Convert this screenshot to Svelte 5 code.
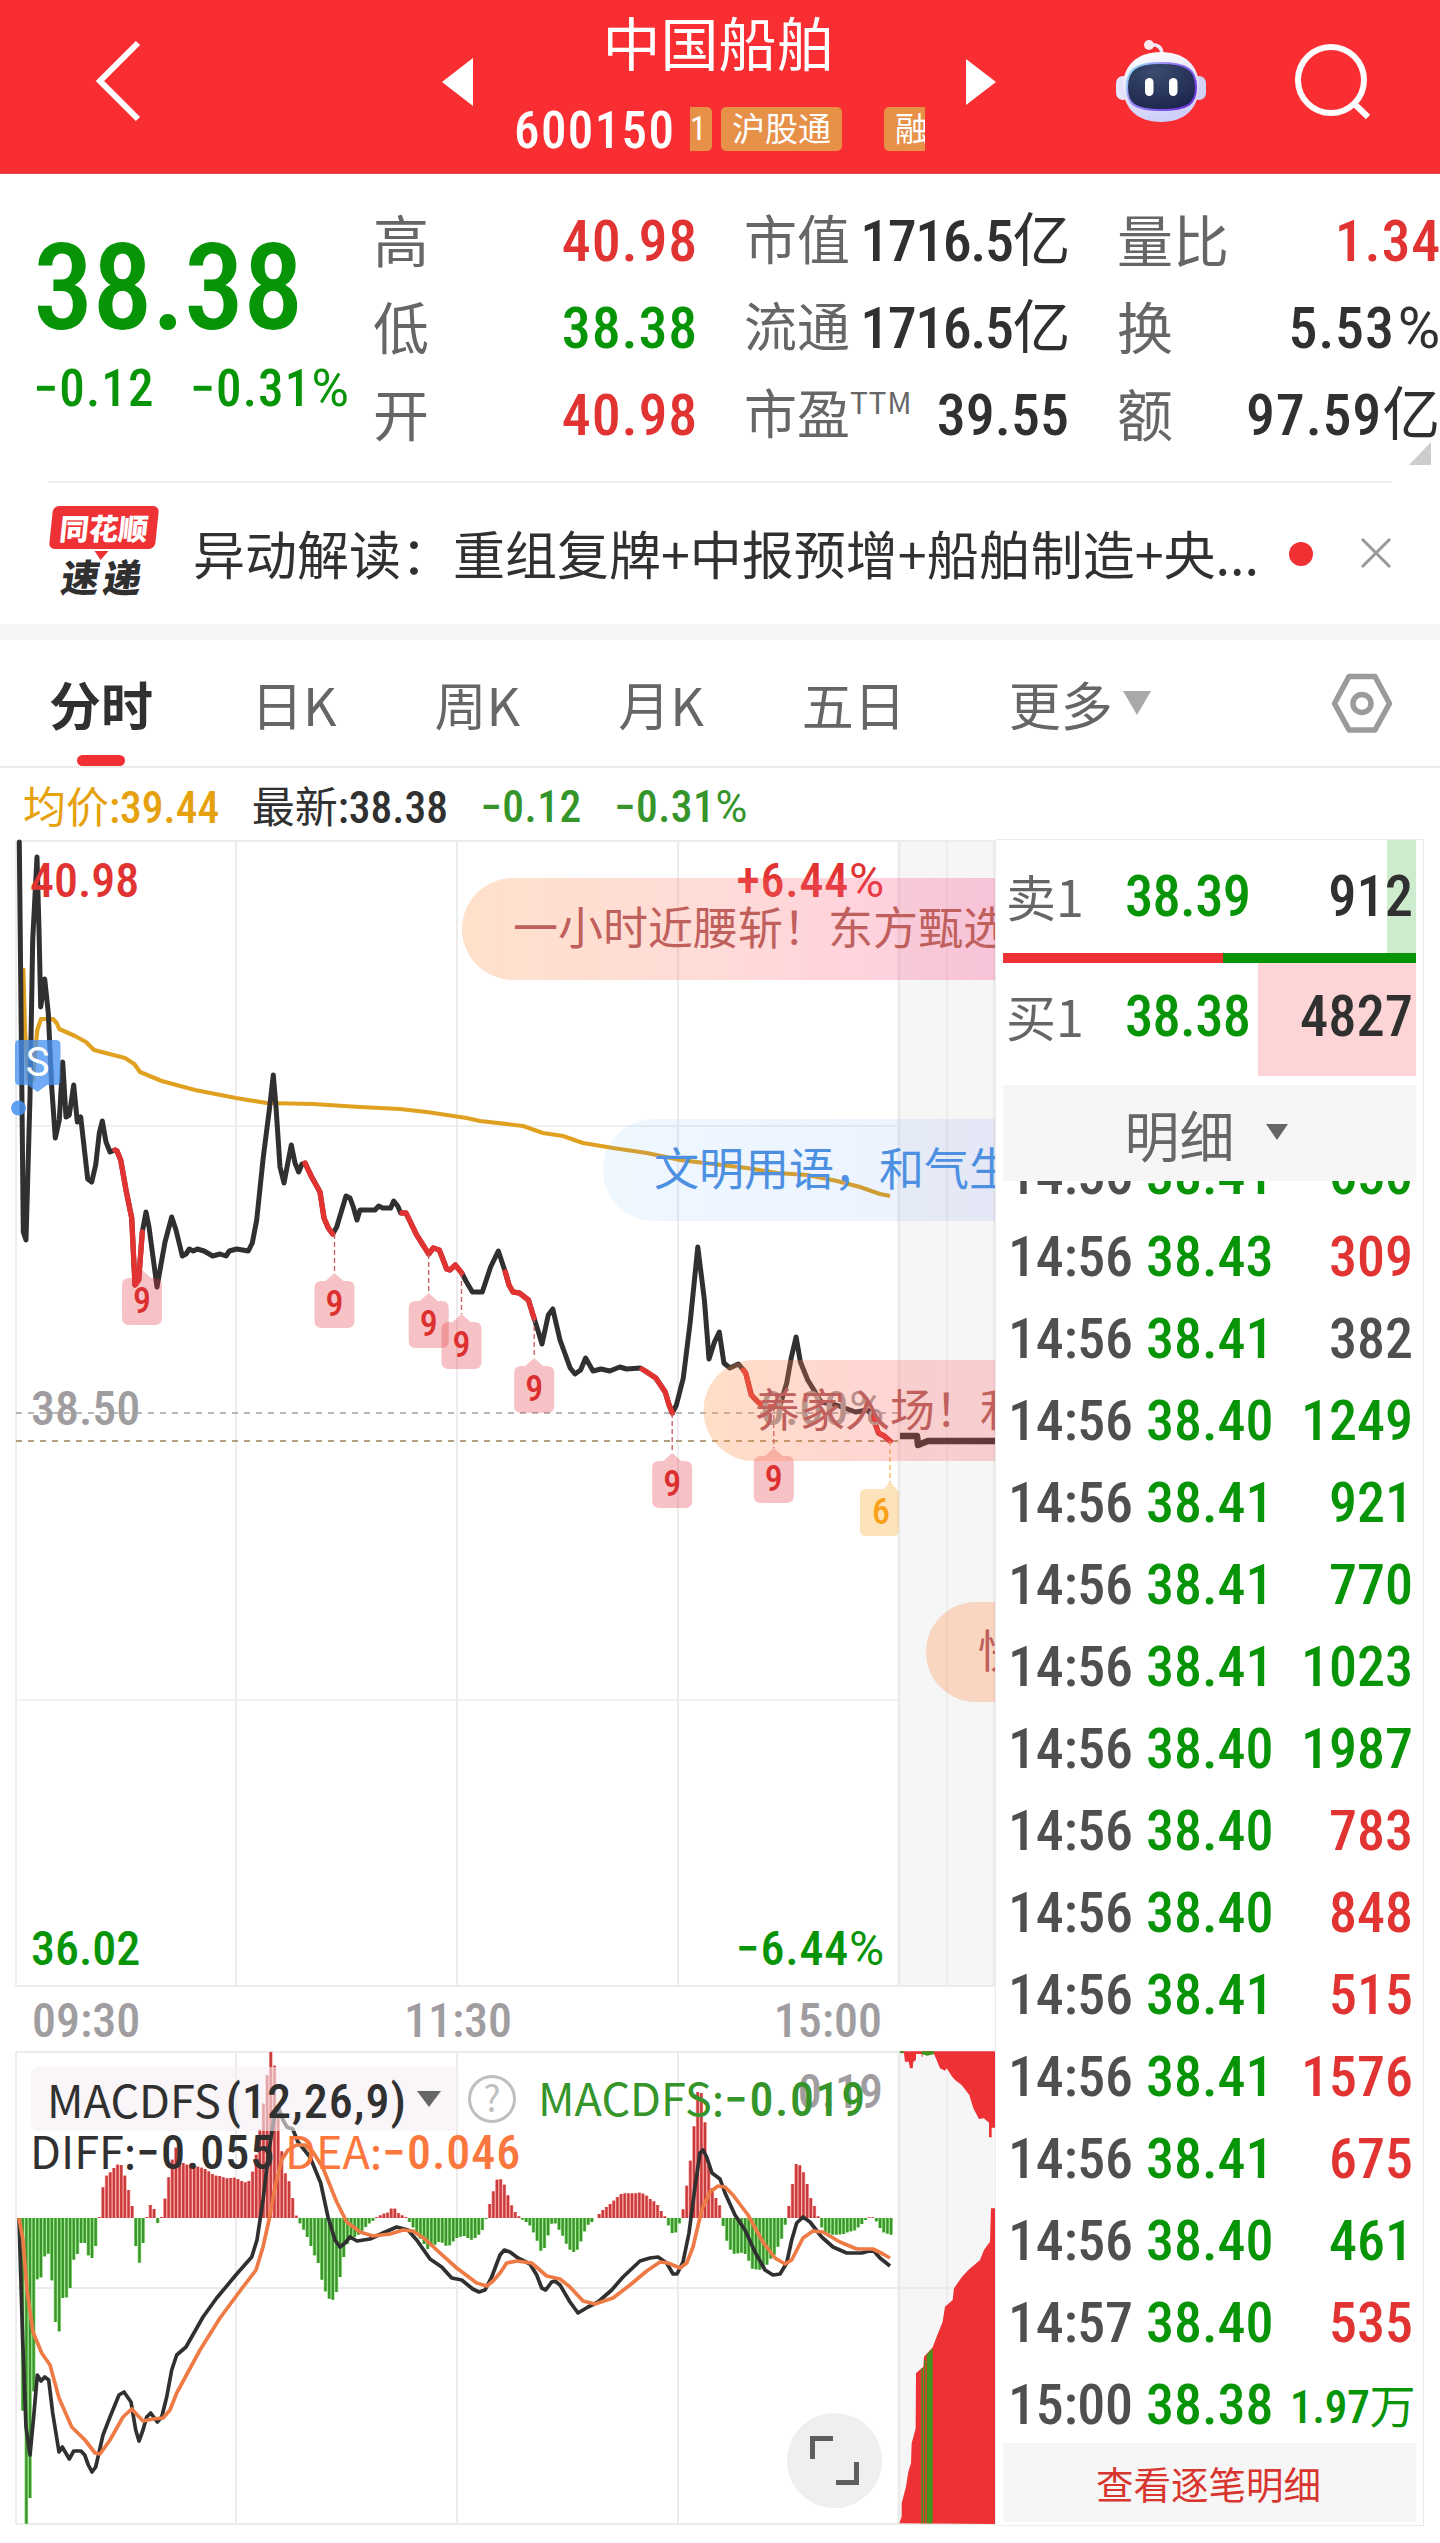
<script lang="ts">
  // ── Quote data ───────────────────────────────────────────────────────────────

  type Tone = 'up' | 'down' | 'flat';

  interface Stat {
    label: string;
    sup?: string;
    value: string;
    tone: Tone;
  }

  const stats: Stat[][] = [
    [
      { label: '高', value: '40.98', tone: 'up' },
      { label: '低', value: '38.38', tone: 'down' },
      { label: '开', value: '40.98', tone: 'up' },
    ],
    [
      { label: '市值', value: '1716.5亿', tone: 'flat' },
      { label: '流通', value: '1716.5亿', tone: 'flat' },
      { label: '市盈', sup: 'TTM', value: '39.55', tone: 'flat' },
    ],
    [
      { label: '量比', value: '1.34', tone: 'up' },
      { label: '换', value: '5.53%', tone: 'flat' },
      { label: '额', value: '97.59亿', tone: 'flat' },
    ],
  ];

  const tabs = ['分时', '日K', '周K', '月K', '五日', '更多'];
  let activeTab = $state('分时');

  const trades: [string, string, string, Tone][] = [
    ['14:56', '38.41', '650', 'down'],
    ['14:56', '38.43', '309', 'up'],
    ['14:56', '38.41', '382', 'flat'],
    ['14:56', '38.40', '1249', 'down'],
    ['14:56', '38.41', '921', 'down'],
    ['14:56', '38.41', '770', 'down'],
    ['14:56', '38.41', '1023', 'down'],
    ['14:56', '38.40', '1987', 'down'],
    ['14:56', '38.40', '783', 'up'],
    ['14:56', '38.40', '848', 'up'],
    ['14:56', '38.41', '515', 'up'],
    ['14:56', '38.41', '1576', 'up'],
    ['14:56', '38.41', '675', 'up'],
    ['14:56', '38.40', '461', 'down'],
    ['14:57', '38.40', '535', 'up'],
    ['15:00', '38.38', '1.97万', 'down'],
  ];

  // ── Intraday chart ───────────────────────────────────────────────────────────

  const priceLine =
    '19.3,842 23.3,1232 26,1240 30,1097 32.7,940 37,857 39,930 40.7,1007 44.7,979 48.3,1013 51.7,1087 55.3,1138 59.3,1120 62.7,1062 66,1117 69.3,1115 73.7,1085 77.3,1122 80.7,1117 87.7,1179 91.7,1182 95.7,1165 99.3,1133 102.3,1121 106,1142 110,1152 115,1150 ' +
    '117,1151 120.7,1160 126,1190 131.7,1218 135,1285 138.7,1280 142.3,1232 146,1212 149,1227 157,1287 165,1242 171.7,1217 176,1230 182.3,1256 186,1254 189.3,1249 193.3,1251 197.3,1249 204,1251 212.7,1256 220,1254 226,1256 229.3,1251 236.7,1249 248.3,1251 252.3,1243 256.7,1220 263.3,1157 269.3,1110 273.3,1075 276,1107 280,1167 284,1183 291.3,1145 295,1163 298.7,1172 302,1164 305,1163 ' +
    '311.7,1177 320,1192 324,1218 328.3,1228 332.7,1234 336.7,1227 346,1196 350,1198 353.3,1207 357,1220 360,1210 375,1210 378.7,1206 382.7,1208 390.7,1208 393.7,1201 397.7,1206 400.7,1213 406,1213 416.7,1235 428.7,1254 433.3,1248 439.3,1250 446.7,1269 450,1270 455.3,1265 461.7,1273 ' +
    '466.5,1282 472.4,1292 482.3,1292 490.6,1267 498.3,1251 505.3,1272 509,1285 513,1292 519.4,1293 528.4,1300 534,1318 537.8,1330 542,1344 548.3,1315 552.8,1309 560,1340 570.2,1368 575,1374 580.6,1370 585.6,1358 593,1371 601,1369 609.8,1371 619.8,1367 626.6,1369 640.4,1368 ' +
    '646.8,1372 655.8,1378 665.2,1392 669.1,1405 672.3,1413 676.4,1405 683.3,1378 690.1,1323 697.8,1247 704.4,1300 709,1359 714.5,1342 719.3,1332 723.9,1363 729.9,1368 738.4,1364 743.4,1370 745.7,1373 751.3,1395 757.9,1402 765.6,1407 773.6,1407 780.2,1405 786.7,1383 791.2,1358 796.1,1337 800.4,1362 807.7,1380 812.7,1388 821,1402 836.4,1405 855.5,1412 867.8,1410 872.8,1417 878.5,1433 884.2,1436 890,1441';

  const fallingRuns = [
    '115,1150 117,1151 120.7,1160 126,1190 131.7,1218 135,1285 138.7,1280 142.3,1232',
    '305,1163 311.7,1177 320,1192 324,1218 328.3,1228 332.7,1234',
    '402,1213 406,1213 416.7,1235 428.7,1254 433.3,1248 439.3,1250 446.7,1269 450,1270 455.3,1265 461.7,1273',
    '505.3,1272 509,1285 513,1292 519.4,1293 528.4,1300 534,1318',
    '642,1369 646.8,1372 655.8,1378 665.2,1392 669.1,1405 672.3,1413',
    '743.4,1370 745.7,1373 751.3,1395 757.9,1402 765.6,1407 773.6,1407',
    '872.8,1417 878.5,1433 884.2,1436 890,1441',
  ];

  const averageLine =
    '23.3,968 25,1030 28,1080 33,1080 36,1043 37.3,1030 41,1019 53,1019 56.7,1023 59.3,1029 75,1036 86,1042 94,1050 125,1058 134.3,1064 140,1072 161.7,1081 195,1090 236,1098 266.7,1103 313,1104 360,1107 400,1109 426.7,1112 466.7,1118 480,1121 523,1126 543,1133 563,1136 583,1143 613,1148 647,1153 680,1160 713,1164 747,1168 777,1173 807,1175 837,1181 860,1187 880,1194 890,1196';

  // x, y of the price point, y of the flag tip
  const nines = [
    [142, 1270, 1270],
    [334.5, 1234, 1273],
    [428.7, 1254, 1293],
    [461.5, 1273, 1314],
    [534.2, 1318, 1358],
    [672.2, 1413, 1453],
    [773.8, 1407, 1448],
  ];

  // ── MACD ─────────────────────────────────────────────────────────────────────

  const zeroY = 2218;

  // histogram, in thirds of a pixel
  const macd = [
    0, -578, -917, -840, -520, -184, -178, -115, -107, -187, -312, -340, -240, -238, -210, -125, -108, -75, -75, -112,
    -120, -84, 3, 92, 127, 137, 150, 160, 159, 127, 84, 36, -84, -134, -75, 3, 39, 27, -15, 3,
    58, 122, 175, 211, 195, 165, 160, 159, 157, 154, 151, 147, 140, 132, 127, 126, 122, 119, 120, 121,
    117, 111, 107, 111, 139, 190, 265, 343, 428, 498, 457, 310, 200, 134, 110, 60, 7, -16, -35, -57,
    -84, -112, -135, -185, -220, -242, -245, -222, -177, -117, -78, -66, -57, -50, -38, -27, -16, -8, 3, 8,
    13, 16, 28, 28, 15, 8, 3, -12, -28, -45, -62, -78, -93, -85, -80, -72, -74, -83, -82, -70,
    -60, -56, -54, -60, -65, -60, -50, -36, -3, 42, 80, 115, 116, 100, 68, 38, 18, 5, -5, -12,
    -22, -43, -68, -98, -90, -52, -17, -16, -35, -53, -77, -95, -102, -95, -70, -40, -20, -12, 0, 12,
    24, 33, 42, 52, 63, 72, 74, 74, 74, 74, 76, 73, 67, 57, 50, 39, 21, 5, -22, -45,
    -43, -16, 26, 97, 172, 275, 378, 375, 287, 160, 90, 60, 38, -24, -68, -95, -107, -106, -104, -108,
    -128, -152, -154, -155, -150, -140, -122, -110, -86, -62, -20, 36, 102, 162, 158, 137, 102, 60, 36, 5,
    -28, -43, -46, -50, -50, -49, -48, -43, -40, -37, -28, -18, -6, 2, 2, -10, -30, -43, -47, -50,
  ];

  const barStep = (891 - 19) / (macd.length - 1);

  const bars = macd.map((v, i) => {
    const height = Math.abs(v) / 3;
    return { x: 19 + i * barStep, y: v > 0 ? zeroY - height : zeroY, height, up: v > 0 };
  });

  const diffLine =
    '19,2218 22.7,2340 26,2427 30,2455 34,2413 37.3,2375 41,2381 44.7,2377 48.7,2380 52.7,2413 59,2452 62.3,2447 69.3,2459 73.7,2451 81,2451 84.7,2455 88.3,2465 92,2472 95.7,2467 103,2435 110,2417 119,2395 124,2392 131,2402 135.7,2430 139,2441 143,2430 146.7,2417 150.7,2413 157.3,2422 161.7,2417 166.7,2397 171.7,2370 176.7,2355 186,2347 203,2317 216.7,2298 236.7,2274 251.7,2257 257,2240 263,2200 269,2150 275,2113 279,2109 283,2120 287,2127 292.7,2129 298,2142 310,2157 320.7,2183 328,2217 335,2240 340,2247 345,2243 350,2237 357,2241 370,2239 383,2233 396.7,2227 408,2230 416.7,2240 430,2259 441.7,2267 451.7,2278 461.7,2280 472.7,2289 479,2292 485,2290 491.7,2277 500,2255 504.3,2250 510,2252 518,2258 530,2264 536.7,2275 541.7,2288 545.7,2290 551.7,2282 555,2281 560,2285 570,2302 578,2313 588,2307 598,2302 611.7,2290 623,2277 640,2261 650,2258 658,2257 666.7,2263 673,2274 677,2274 683,2262 689,2233 695,2187 700,2153 703,2150 706.7,2157 712,2173 720,2179 725,2193 735,2215 745,2230 755,2252 765,2270 773,2275 780,2274 786.7,2263 791.7,2240 796.7,2223 803,2217 810,2222 821.7,2237 833,2247 846.7,2253 861.7,2253 873,2250 880,2258 890,2266';

  const deaLine =
    '19,2218 23,2240 27,2290 33,2332 41.7,2353 50,2365 59,2398 71.7,2427 85,2440 95,2453 100,2454 110,2440 123,2417 131.7,2409 143,2421 153,2419 163,2418 170,2410 176.7,2393 200,2350 220,2318 243,2287 256,2270 263,2247 269,2220 275,2187 281.7,2160 288,2150 296.7,2145 305,2145 313,2152 323,2168 336.7,2202 346.7,2222 360,2232 373,2236 390,2234 403,2230 413,2231 425,2239 440,2253 456.7,2268 476.7,2283 486.7,2286 493,2281 500,2273 506.7,2263 516.7,2261 531.7,2263 546.7,2276 560,2279 570,2287 583,2301 595,2304 613,2298 630,2285 646.7,2271 660,2262 668,2263 680,2268 686.7,2263 693,2247 701.7,2210 710,2192 718,2186 725,2187 733,2195 748,2215 763,2242 775,2258 785,2264 791.7,2260 803,2238 813,2231 823,2232 840,2242 856.7,2249 873,2249 883,2254 890,2258';
</script>

<!-- number with its trailing unit in a lighter face -->
{#snippet figure(value: string)}
  {#if value.endsWith('%')}{value.slice(0, -1)}<i class="pct">%</i>{:else if /[亿万]$/.test(value)}{value.slice(0, -1)}<i class="unit">{value.slice(-1)}</i>{:else}{value}{/if}
{/snippet}

<div class="page">
  <!-- ── Title bar ── -->
  <header class="topbar">
    <svg class="back" width="50" height="84" viewBox="0 0 50 84" fill="none" stroke="#fff" stroke-width="6" aria-label="返回">
      <path d="M44 3 6 41 44 79" />
    </svg>
    <svg class="prev" width="31" height="48" viewBox="0 0 31 48" fill="#fff"><path d="M31 0v48L0 24z" /></svg>
    <div class="stock">
      <h1>中国船舶</h1>
      <div class="code-row">
        <span class="code">600150</span>
        <div class="tags">
          <span class="tag tag--first">1</span>
          <span class="tag">沪股通</span>
          <span class="tag tag--last">融</span>
        </div>
      </div>
    </div>
    <svg class="next" width="30" height="46" viewBox="0 0 30 46" fill="#fff"><path d="M0 0v46L30 23z" /></svg>
    <svg class="robot" width="90" height="84" viewBox="0 0 90 84">
      <defs>
        <linearGradient id="shell" x1="0" y1="0" x2="0.3" y2="1">
          <stop offset="0" stop-color="#fff" />
          <stop offset="0.6" stop-color="#e4e2f8" />
          <stop offset="1" stop-color="#cfd0fa" />
        </linearGradient>
        <linearGradient id="rim" x1="0" y1="0" x2="1" y2="0.6">
          <stop offset="0" stop-color="#8ff0f0" />
          <stop offset="0.4" stop-color="#9a8cf8" />
          <stop offset="1" stop-color="#7038e0" />
        </linearGradient>
        <radialGradient id="visor" cx="0.4" cy="0.2" r="0.9">
          <stop offset="0" stop-color="#3c4a6e" />
          <stop offset="1" stop-color="#18234a" />
        </radialGradient>
      </defs>
      <path d="M33 5q13-2 13 10" fill="none" stroke="#efeaf8" stroke-width="3.5" />
      <circle cx="33" cy="5" r="5" fill="#fbe9f0" />
      <rect x="0" y="36" width="14" height="24" rx="7" fill="#e6e4fa" />
      <rect x="76" y="36" width="14" height="24" rx="7" fill="#d2d2f6" />
      <path d="M45 12c24 0 38 14 38 34 0 22-14 36-38 36S7 68 7 46c0-20 14-34 38-34z" fill="url(#shell)" />
      <path d="M45 23c26 0 35 7 35 24s-8 23-35 23-34-6-34-23 8-24 34-24z" fill="url(#visor)" stroke="url(#rim)" stroke-width="2" />
      <rect x="29" y="38" width="8.5" height="18" rx="4.2" fill="#fff" />
      <rect x="53" y="38" width="8.5" height="18" rx="4.2" fill="#fff" />
    </svg>
    <svg class="search" width="78" height="78" viewBox="0 0 78 78" fill="none" stroke="#fff" stroke-width="6" aria-label="搜索">
      <circle cx="36" cy="37" r="33" />
      <path d="M59.5 61 73 74" />
    </svg>
  </header>

  <!-- ── Quote ── -->
  <section class="quote">
    <div class="last">
      <strong class="last-price">38.38</strong>
      <div class="last-change"><span>−0.12</span><span>{@render figure('−0.31%')}</span></div>
    </div>
    {#each stats as column, c (c)}
      <dl class="stats" class:stats--cap={c === 1}>
        {#each column as stat (stat.label)}
          <div class="stat">
            <dt>{stat.label}{#if stat.sup}<sup>{stat.sup}</sup>{/if}</dt>
            <dd class={stat.tone} class:with-unit={stat.value.endsWith('亿')}>{@render figure(stat.value)}</dd>
          </div>
        {/each}
      </dl>
    {/each}
    <svg class="corner" width="22" height="23" viewBox="0 0 22 23" fill="#ccc"><path d="M22 0v23H0z" /></svg>
  </section>

  <!-- ── News strip ── -->
  <section class="news">
    <div class="news-logo">
      <span class="logo-top">同花顺</span>
      <span class="logo-bottom">速递</span>
    </div>
    <p class="news-text">异动解读：重组复牌+中报预增+船舶制造+央...</p>
    <span class="dot"></span>
    <svg width="32" height="32" viewBox="0 0 32 32" stroke="#999" stroke-width="3" aria-label="关闭">
      <path d="M2 1 30 29M30 1 2 29" />
    </svg>
  </section>

  <!-- ── Period tabs ── -->
  <nav class="tabs">
    {#each tabs as tab (tab)}
      <button class="tab" class:tab--active={tab === activeTab} onclick={() => (activeTab = tab)}>{tab}</button>
    {/each}
    <svg class="more" width="28" height="24" viewBox="0 0 28 24" fill="#aaa8aa"><path d="M0 0h28L14 24z" /></svg>
    <svg class="settings" width="62" height="60" viewBox="0 0 62 60" fill="none" stroke="#9b9b9b" stroke-width="5.5" stroke-linejoin="round">
      <path d="M18 3.5h26L58.500 30.500 44 57H18L3.500 30.500z" />
      <circle cx="31" cy="30.500" r="9" />
    </svg>
  </nav>

  <div class="summary">
    <span class="avg"><i class="unit">均价</i>:39.44</span>
    <span><i class="unit">最新</i>:38.38</span>
    <span class="chg">−0.12</span>
    <span class="chg">{@render figure('−0.31%')}</span>
  </div>

  <main class="board">
    <svg class="chart" width="995" height="1704" viewBox="0 839 995 1704">
      <defs>
        <linearGradient id="warm" x1="0" x2="1">
          <stop offset="0" stop-color="#ff9a50" stop-opacity="0.3" />
          <stop offset="0.45" stop-color="#ff7a68" stop-opacity="0.26" />
          <stop offset="1" stop-color="#ff3288" stop-opacity="0.26" />
        </linearGradient>
        <linearGradient id="peach" x1="0" x2="1">
          <stop offset="0" stop-color="#ff9a50" stop-opacity="0.32" />
          <stop offset="0.5" stop-color="#ff6a58" stop-opacity="0.27" />
          <stop offset="1" stop-color="#ff4c58" stop-opacity="0.24" />
        </linearGradient>
        <linearGradient id="cool" x1="0" x2="1">
          <stop offset="0" stop-color="#4da6ff" stop-opacity="0.09" />
          <stop offset="0.6" stop-color="#4d96ff" stop-opacity="0.1" />
          <stop offset="1" stop-color="#5a6ef0" stop-opacity="0.11" />
        </linearGradient>
      </defs>

      <!-- grid -->
      <rect x="898" y="841" width="98" height="1145" fill="#f6f6f6" />
      <rect x="898" y="2052" width="98" height="472" fill="#f6f6f6" />
      <g stroke="#ececec" stroke-width="2" fill="none">
        <path d="M16 841V1986M236 841V1986M457 841V1986M678 841V1986M947 841V1986M994 841V1986" />
        <path d="M16 841H995M16 1986H995" />
        <path d="M16 1126H899M16 1700H899" stroke-width="1.5" />
        <path d="M16 2052V2524M236 2052V2524M457 2052V2524M678 2052V2524M947 2052V2524" />
        <path d="M16 2052H995M16 2288H995M16 2524H995" />
        <path d="M899 841V1986M899 2052V2524" stroke-width="3" />
      </g>
      <path d="M16 1413H899" stroke="#a0a0a0" stroke-width="1.700" stroke-dasharray="6 6" />
      <path d="M16 1441H899" stroke="#b39f7c" stroke-width="2" stroke-dasharray="6 6" />

      <!-- price and average -->
      <g fill="none" stroke-linejoin="round" stroke-linecap="round">
        <polyline points={averageLine} stroke="#e0a020" stroke-width="4.2" stroke-linecap="butt" />
        <polyline points={priceLine} stroke="#303030" stroke-width="5" />
        {#each fallingRuns as run (run)}
          <polyline points={run} stroke="#e03332" stroke-width="5.4" />
        {/each}
        <polyline points="900,1436 917,1436 918,1445 923,1443 928,1441 996,1441" stroke="#303030" stroke-width="6.5" stroke-linecap="butt" />
      </g>

      <!-- nine-count flags -->
      {#each nines as [x, from, tip] (x)}
        <path d="M{x} {from}V{tip}" stroke="#c65a60" stroke-width="1.3" stroke-dasharray="5 3" />
        <path class="flag" d="M{x} {tip}l9 8h4q7 0 7 7v33q0 7-7 7h-26q-7 0-7-7v-33q0-7 7-7h4z" />
        <text class="num flag-num" {x} y={tip + 43}>9</text>
      {/each}
      <path d="M890 1441V1482" stroke="#f2b95a" stroke-width="1.3" stroke-dasharray="5 3" />
      <path d="M890 1481l6 8q3 1 3 5v36q0 6-6 6h-27q-6 0-6-6v-35q0-6 6-6h18z" fill="#f9a11b" fill-opacity="0.3" />
      <text class="num flag-num flag-num--amber" x="881" y="1524">6</text>

      <!-- sell marker -->
      <path d="M19 1040h37q4.5 0 4.5 4.5v36q0 4.5-4.5 4.5h-9l-9.5 7-9.5-7h-9q-4 0-4-4.5v-36q0-4.5 4-4.5z" fill="#4590f2" fill-opacity="0.76" />
      <text class="sell" x="37.5" y="1076">S</text>
      <circle cx="18.500" cy="1108" r="7.5" fill="#4590f2" fill-opacity="0.85" />

      <!-- axis labels -->
      <g class="num axis">
        <text class="fill-up" x="30" y="897">40.98</text>
        <text class="fill-up wide" x="885" y="897" text-anchor="end">+6.44<tspan class="pct">%</tspan></text>
        <text x="31" y="1425">38.50</text>
        <text class="wide" x="885" y="1425" text-anchor="end">0.00<tspan class="pct">%</tspan></text>
        <text class="fill-down" x="31" y="1965">36.02</text>
        <text class="fill-down wide" x="885" y="1965" text-anchor="end">−6.44<tspan class="pct">%</tspan></text>
        <text x="32" y="2037">09:30</text>
        <text x="458" y="2037" text-anchor="middle">11:30</text>
        <text x="882" y="2037" text-anchor="end">15:00</text>
      </g>

      <!-- bullet comments -->
      <path d="M1000 878H513a51 51 0 0 0 0 102H1000z" fill="url(#warm)" />
      <text class="bullet" x="513" y="945">一小时近腰斩！东方甄选</text>
      <path d="M1000 1119H654a51 51 0 0 0 0 102H1000z" fill="url(#cool)" />
      <text class="bullet bullet--blue" x="654" y="1186">文明用语，和气生</text>
      <path d="M1000 1360H754a50.5 50.5 0 0 0 0 101H1000z" fill="url(#peach)" />
      <text class="bullet" x="755" y="1427">养家入场！利</text>
      <path d="M1000 1602H976a50 50 0 0 0 0 100H1000z" fill="#ff8a4a" fill-opacity="0.3" />
      <text class="bullet" x="978" y="1668">快</text>

      <!-- macd -->
      {#each bars as bar, i (i)}
        <rect x={bar.x - 1.8} y={bar.y} width={barStep} height={bar.height} class={bar.up ? 'bar-up-soft' : 'bar-down-soft'} />
        <rect x={bar.x - 1.1} y={bar.y} width="2.3" height={bar.height} class={bar.up ? 'bar-up' : 'bar-down'} />
      {/each}
      <g fill="none" stroke-width="3.7" stroke-linejoin="round">
        <polyline points={diffLine} stroke="#303030" />
        <polyline points={deaLine} stroke="#ee7a45" />
      </g>

      <rect x="31" y="2067" width="428" height="64" rx="7" fill="#f5eff4" fill-opacity="0.6" />
      <text class="macd-label" x="47" y="2118">MACDFS<tspan class="num" dx="5">(12,26,9)</tspan></text>
      <path d="M417 2091h24l-12 16z" fill="#666" />
      <circle cx="492" cy="2099" r="22.5" fill="none" stroke="#c0bfc0" stroke-width="3" />
      <text class="help" x="492" y="2112">?</text>
      <text class="num axis" x="883" y="2108" text-anchor="end">0.19</text>
      <text class="macd-label macd-label--green" x="538" y="2116">MACDFS:<tspan class="num">−0.019</tspan></text>
      <text class="macd-label" x="30" y="2169">DIFF:<tspan class="num">−0.055</tspan></text>
      <text class="macd-label macd-label--orange" x="285" y="2169">DEA:<tspan class="num">−0.046</tspan></text>

      <!-- closing auction -->
      <g transform="translate(480 2040) scale(0.33333)">
        <path
          d="M1258 34l14 6 3 25h11l4 20h8l2-20 8-5v-18h17v8h3v-8h34l8 18 10 25 15 7 5-7 15 23 10 12 20 15 23 30 12 40 17 32 15-2 15 13v44h8v-29h10V34z"
          fill="#ee3134"
        />
        <path d="M1258 34h14l-2 6h-8zM1325 34h37v8l-20 5-17-5z" fill="#43951f" />
        <path
          d="M1258 1450l7-20v-40l13-50 7-45 8-25 2-60 12-45 1-165 22-20 2-30 26-28 12-32 18-45 7-45 23-20 4-35 23-33 20-22 35-30 12-30 18-25 3-100h12v947z"
          fill="#ee3134"
        />
        <path d="M1324 985h5v465h-5zM1332 960h4v490h-4zM1340 944l18-20v526h-18z" fill="#43951f" />
      </g>

      <circle cx="834.500" cy="2460.500" r="47.5" fill="#efefef" />
      <path d="M812.5 2459V2438.5H833M836 2482.5H856.5V2462" fill="none" stroke="#5e5e5e" stroke-width="5" />
    </svg>

    <!-- ── Order book and ticks ── -->
    <aside class="book">
      <div class="level level--ask">
        <span class="side">卖1</span>
        <span class="price down">38.39</span>
        <span class="volume">912</span>
      </div>
      <div class="ratio"></div>
      <div class="level level--bid">
        <span class="side">买1</span>
        <span class="price down">38.38</span>
        <span class="volume">4827</span>
      </div>
      <div class="detail-head">
        明细
        <svg width="22" height="16" viewBox="0 0 22 16" fill="#666"><path d="M0 0h22L11 16z" /></svg>
      </div>
      <div class="trades">
        {#each trades as [time, price, volume, tone], i (i)}
          <div class="trade">
            <span class="time">{time}</span>
            <span class="price down">{price}</span>
            <span class="volume {tone}" class:compact={volume.includes('万')}>{@render figure(volume)}</span>
          </div>
        {/each}
      </div>
      <button class="all-trades">查看逐笔明细</button>
    </aside>
  </main>
</div>

<style>
  :global(body) {
    background: #fff;
  }

  .page {
    --cjk: 'Noto Sans CJK SC', sans-serif;
    --num: 'Roboto Condensed', 'Noto Sans CJK SC', sans-serif;
    --up: #e03332;
    --down: #079407;
    --ink: #303030;
    --label: #666;
    width: 1440px;
    height: 2543px;
    overflow: hidden;
    font-family: var(--cjk);
    color: var(--ink);
  }

  .page * {
    box-sizing: border-box;
  }

  button {
    border: 0;
    padding: 0;
    background: none;
    font: inherit;
    color: inherit;
  }

  .up {
    color: var(--up);
  }

  .down {
    color: var(--down);
  }

  .pct {
    font-family: Roboto, sans-serif;
    font-weight: 400;
    font-style: normal;
  }

  .unit {
    font-weight: 400;
    font-style: normal;
  }

  /* ── Title bar ── */

  .topbar {
    display: flex;
    align-items: center;
    height: 174px;
    padding: 0 67px 10px 94px;
    background: #f92e33;
    border-bottom: 1px solid #e2474b;
    color: #fff;
  }

  .topbar svg {
    flex: none;
  }

  .prev {
    margin-left: 298px;
  }

  .stock {
    align-self: flex-start;
    width: 452px;
    margin: 5px 0 0 41px;
  }

  h1 {
    width: 409px;
    margin: 0;
    font-size: 58px;
    font-weight: 400;
    line-height: 72px;
    text-align: center;
  }

  .code-row {
    display: flex;
    align-items: center;
    height: 44px;
    margin-top: 30px;
  }

  .code {
    width: 176px;
    padding-top: 4px;
    font: 500 51px/44px var(--num);
    letter-spacing: 1.4px;
  }

  .tags {
    display: flex;
    width: 235px;
    overflow: hidden;
    font-size: 33px;
    line-height: 40px;
    white-space: nowrap;
  }

  .tag {
    flex: none;
    height: 44px;
    margin-right: 42px;
    padding: 0 11px;
    border-radius: 5px;
    background: #e69048;
  }

  .tag--first {
    width: 22px;
    margin-right: 9px;
    padding: 0;
    border-radius: 0 5px 5px 0;
    font: 400 33px/44px var(--num);
  }

  .next {
    margin-right: 120px;
  }

  .robot {
    margin-right: 89px;
  }

  /* ── Quote ── */

  .quote {
    position: relative;
    display: grid;
    grid-template-columns: 289px 321px 321px 322px;
    column-gap: 50px;
    height: 307px;
    margin: 0 0 0 36px;
    padding-top: 23px;
  }

  .last {
    padding-top: 31px;
    margin-left: -3px;
    font-family: var(--num);
    font-weight: 500;
    color: #079407;
    white-space: nowrap;
  }

  .last-price {
    display: block;
    font-size: 121px;
    font-weight: 500;
    line-height: 120px;
    letter-spacing: -1.3px;
  }

  .last-change {
    display: flex;
    gap: 35px;
    margin-top: 11px;
    font-size: 51px;
    line-height: 60px;
    letter-spacing: 1.2px;
  }

  .stats {
    margin: 0 0 0 -2px;
  }

  .stats:nth-of-type(3) {
    margin-left: 0;
  }

  .stat {
    display: flex;
    align-items: center;
    justify-content: space-between;
    height: 87px;
    margin-right: -2px;
    line-height: 87px;
    white-space: nowrap;
  }

  dt {
    display: flex;
    padding-bottom: 7px;
    font-size: 56px;
    color: var(--label);
  }

  .stats--cap dt {
    font-size: 53px;
  }

  sup {
    font-size: 30px;
    font-weight: 400;
    line-height: 66px;
    letter-spacing: 0.6px;
    vertical-align: baseline;
  }

  dd {
    margin: 0;
    font: 500 58px/88px var(--num);
    letter-spacing: 0.8px;
  }

  dd .pct {
    margin-left: 3px;
  }

  .stats--cap dd.with-unit {
    letter-spacing: -1.5px;
  }

  .stats--cap dd {
    letter-spacing: 0;
  }

  .corner {
    position: absolute;
    right: 9px;
    bottom: 16px;
  }

  /* ── News strip ── */

  .news {
    display: flex;
    align-items: center;
    height: 143px;
    margin: 0 48px;
    border-top: 2px solid #efefef;
  }

  .news-logo {
    display: flex;
    flex-direction: column;
    align-items: center;
    width: 112px;
    height: 96px;
    font-weight: 900;
  }

  .logo-top {
    position: relative;
    width: 106px;
    height: 46px;
    border-radius: 6px;
    background: #ee3134;
    color: #fff;
    font-size: 29.5px;
    line-height: 43px;
    text-align: center;
    transform: skewX(-6deg);
  }

  .logo-top::after {
    content: '';
    position: absolute;
    left: 46px;
    top: 45px;
    border: 7px solid transparent;
    border-top: 9px solid #ee3134;
    border-bottom: 0;
  }

  .logo-bottom {
    font-size: 38px;
    line-height: 54px;
    letter-spacing: 4px;
    transform: skewX(-9deg);
  }

  .news-text {
    width: 1094px;
    margin: 0;
    padding: 0 0 1px 33px;
    font-size: 52px;
    line-height: 70px;
    white-space: nowrap;
  }

  .dot {
    width: 24px;
    height: 24px;
    margin: 0 auto 0 35px;
    border-radius: 50%;
    background: #f03032;
  }

  /* ── Period tabs ── */

  .tabs {
    display: flex;
    align-items: center;
    gap: 98px;
    height: 144px;
    padding: 0 47px 0 49px;
    border-top: 16px solid #f6f6f6;
    border-bottom: 2px solid #ebebeb;
  }

  .tab {
    position: relative;
    height: 126px;
    font-size: 52px;
    line-height: 127px;
    color: var(--label);
    white-space: nowrap;
  }

  .tab:nth-of-type(6) {
    margin-left: 5px;
  }

  .tab--active {
    font-weight: 600;
    color: var(--ink);
  }

  .tab--active::after {
    content: '';
    position: absolute;
    left: 28px;
    bottom: 0;
    width: 48px;
    height: 11px;
    border-radius: 6px;
    background: #f03032;
  }

  .more {
    margin-left: -88px;
  }

  .settings {
    margin-left: auto;
  }

  .summary {
    display: flex;
    gap: 32.5px;
    height: 71px;
    padding-left: 23px;
    font: 500 43.5px/80px var(--num);
    white-space: nowrap;
  }

  .summary .unit {
    font-size: 43px;
  }

  .avg {
    color: #e6a10f;
  }

  .chg {
    color: #35952a;
    letter-spacing: 0.5px;
  }

  /* ── Chart ── */

  .board {
    display: flex;
    align-items: flex-start;
  }

  .chart {
    display: block;
    flex: none;
  }

  .num {
    font-family: var(--num);
    font-weight: 500;
  }

  .axis {
    font-size: 48px;
    fill: #9f9d9f;
  }

  .wide {
    letter-spacing: 0.8px;
  }

  .fill-up {
    fill: var(--up);
  }

  .fill-down {
    fill: var(--down);
  }

  .flag {
    fill: #e4343f;
    fill-opacity: 0.3;
  }

  .flag-num {
    font-size: 36px;
    font-weight: 500;
    fill: #dc3030;
    text-anchor: middle;
  }

  .flag-num--amber {
    fill: #f9a11b;
  }

  .sell {
    font: 400 40px Roboto, sans-serif;
    fill: #fff;
    text-anchor: middle;
  }

  .bullet {
    font-size: 45px;
    fill: #c0605d;
  }

  .bullet--blue {
    fill: #4d90e2;
  }

  .bar-up {
    fill: #c73c3c;
  }

  .bar-up-soft {
    fill: #fb9a9a;
  }

  .bar-down {
    fill: #3c952a;
  }

  .bar-down-soft {
    fill: #8fdf80;
  }

  .macd-label {
    font-size: 45px;
    fill: var(--ink);
  }

  .macd-label .num {
    font-size: 48px;
    letter-spacing: 1px;
  }

  .macd-label--green {
    fill: #35952a;
  }

  .macd-label--green .num {
    letter-spacing: 1.6px;
  }

  .macd-label--orange {
    fill: #fa773d;
  }

  .help {
    font-size: 36px;
    fill: #c0bfc0;
    text-anchor: middle;
  }

  /* ── Order book and ticks ── */

  .book {
    width: 429px;
    height: 1687px;
    padding: 0 7px;
    border: 1px solid #ebebeb;
  }

  .level {
    display: flex;
    align-items: center;
    height: 113px;
    padding: 0 3px 0 3px;
    font: 500 56.5px/80px var(--num);
  }

  .level .side {
    width: 119px;
    padding-bottom: 5px;
    font: 400 50px/70px var(--cjk);
    color: var(--label);
  }

  .level .price {
    letter-spacing: -0.7px;
  }

  .level .volume {
    margin-left: auto;
  }

  .level--ask {
    padding-top: 1px;
    background: linear-gradient(#cdebcd, #cdebcd) right / 29px 100% no-repeat;
  }

  .level--bid {
    padding-bottom: 5px;
    background: linear-gradient(#fdd5d7, #fdd5d7) right / 158px 100% no-repeat;
  }

  .ratio {
    height: 10px;
    background: linear-gradient(90deg, #ee3134 220px, #079407 220px);
  }

  .detail-head {
    display: flex;
    align-items: center;
    justify-content: center;
    gap: 31px;
    height: 96px;
    margin-top: 9px;
    padding-right: 7px;
    background: #f6f6f6;
    font-size: 55px;
    line-height: 90px;
    color: var(--label);
  }

  .detail-head svg {
    margin-top: -2px;
  }

  .trades {
    height: 1262px;
    overflow: hidden;
    font: 500 56px/82px var(--num);
  }

  .trade {
    display: flex;
    height: 82px;
    padding: 0 3px 0 5px;
  }

  .trade:first-child {
    margin-top: -47px;
  }

  .time {
    width: 138px;
    color: #4f4f4f;
    letter-spacing: -0.3px;
  }

  .trade .volume {
    margin-left: auto;
  }

  .volume.flat {
    color: #4f4f4f;
  }

  .trade .compact {
    margin-right: -2px;
    padding-top: 2px;
    font-size: 46px;
    letter-spacing: -0.5px;
  }

  .all-trades {
    display: block;
    width: 100%;
    height: 79px;
    padding-right: 2px;
    background: #f6f6f6;
    font-size: 37.5px;
    line-height: 74px;
    color: #d9352f;
    text-align: center;
  }
</style>
